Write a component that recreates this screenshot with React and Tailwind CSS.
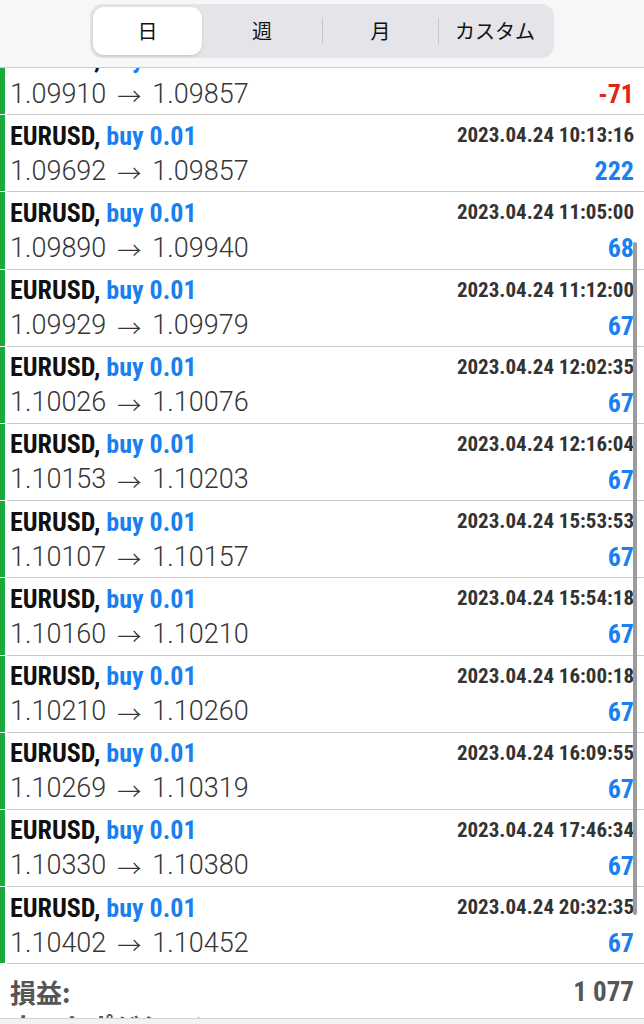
import React from "react";

const rows = [
  { time: "2023.04.24 09:58:41", a: "1.09910", b: "1.09857", p: "-71" },
  { time: "2023.04.24 10:13:16", a: "1.09692", b: "1.09857", p: "222" },
  { time: "2023.04.24 11:05:00", a: "1.09890", b: "1.09940", p: "68" },
  { time: "2023.04.24 11:12:00", a: "1.09929", b: "1.09979", p: "67" },
  { time: "2023.04.24 12:02:35", a: "1.10026", b: "1.10076", p: "67" },
  { time: "2023.04.24 12:16:04", a: "1.10153", b: "1.10203", p: "67" },
  { time: "2023.04.24 15:53:53", a: "1.10107", b: "1.10157", p: "67" },
  { time: "2023.04.24 15:54:18", a: "1.10160", b: "1.10210", p: "67" },
  { time: "2023.04.24 16:00:18", a: "1.10210", b: "1.10260", p: "67" },
  { time: "2023.04.24 16:09:55", a: "1.10269", b: "1.10319", p: "67" },
  { time: "2023.04.24 17:46:34", a: "1.10330", b: "1.10380", p: "67" },
  { time: "2023.04.24 20:32:35", a: "1.10402", b: "1.10452", p: "67" },
];

const cond = {
  fontFamily: '"Liberation Sans Narrow", "Roboto Condensed", Roboto, sans-serif',
};
const light = { fontFamily: 'Roboto, "Liberation Sans", "DejaVu Sans", sans-serif' };
const arrow = { fontFamily: '"Noto Sans CJK JP", "DejaVu Sans", sans-serif' };
const jp = { fontFamily: '"Noto Sans CJK JP", "Noto Sans", sans-serif' };

function Row({ r }) {
  const neg = r.p.startsWith("-");
  return (
    <div className="flex h-[77.2px]">
      <div className="w-[5px] bg-[#1aa93a] mb-[1px] shrink-0" />
      <div className="flex-1 ml-[2px] border-b border-[#c9c9c9] pl-[3px] pr-[10px] flex flex-col">
        <div className="h-[39px] flex items-center justify-between pt-[2px]">
          <div className="text-[26px] font-bold leading-none" style={cond}>
            <span className="text-[#111]">EURUSD, </span>
            <span className="text-[#1a7ff0]">buy 0.01</span>
          </div>
          <div className="text-[21px] font-bold leading-none text-[#333]" style={cond}>
            {r.time}
          </div>
        </div>
        <div className="h-[34px] flex items-center justify-between">
          <div className="flex items-center text-[27px] font-light leading-none text-[#363636]" style={light}>
            <span>{r.a}</span>
            <span className="text-[24px] font-light mx-[11px] relative top-[1px]" style={arrow}>
              →
            </span>
            <span>{r.b}</span>
          </div>
          <div
            className={`text-[26px] font-bold leading-none ${neg ? "text-[#e0241b]" : "text-[#1a7ff0]"}`}
            style={cond}
          >
            {r.p}
          </div>
        </div>
      </div>
    </div>
  );
}

export default function App() {
  return (
    <div className="relative w-[644px] h-[1024px] overflow-hidden bg-white">
      <div className="pt-[38px]">
        {rows.map((r, i) => (
          <Row key={i} r={r} />
        ))}
        <div className="h-[44px] flex items-start justify-between pt-[15px] pl-[10px] pr-[10px]">
          <div className="text-[26px] font-bold text-[#555] leading-none" style={jp}>
            損益:
          </div>
          <div className="text-[27px] font-bold text-[#555] leading-none" style={cond}>
            1 077
          </div>
        </div>
        <div className="mt-[5px] pl-[10px] text-[26px] font-bold text-[#555] leading-none" style={jp}>
          ネットポジション:
        </div>
      </div>

      {/* header */}
      <div className="absolute top-0 left-0 right-0 h-[68px] bg-[#f7f7f8] border-b border-[#cdcdcd] flex justify-center pt-[4px]">
        <div className="w-[464px] h-[54px] bg-[#e4e4e9] rounded-[13px] p-[3px] flex items-center">
          <div className="w-[109px] h-full bg-white rounded-[11px] shadow-[0_1px_3px_rgba(0,0,0,0.15)] flex items-center justify-center text-[20px] text-[#111]" style={jp}>
            日
          </div>
          <div className="w-[120px] h-full flex items-center justify-center text-[20px] text-[#111]" style={jp}>
            週
          </div>
          <div className="w-px h-[26px] bg-[#c8c8cc]" />
          <div className="w-[115px] h-full flex items-center justify-center text-[20px] text-[#111]" style={jp}>
            月
          </div>
          <div className="w-px h-[26px] bg-[#c8c8cc]" />
          <div className="flex-1 h-full flex items-center justify-center text-[20px] text-[#111]" style={jp}>
            カスタム
          </div>
        </div>
      </div>

      {/* scrollbar */}
      <div className="absolute left-[633px] top-[242px] w-[4px] h-[673px] rounded-full bg-[#9c9c9c]" />

      {/* footer */}
      <div className="absolute left-0 right-0 bottom-0 h-[6px] bg-[#f2f2f2] border-t border-[#d6d6d6]" />
    </div>
  );
}
